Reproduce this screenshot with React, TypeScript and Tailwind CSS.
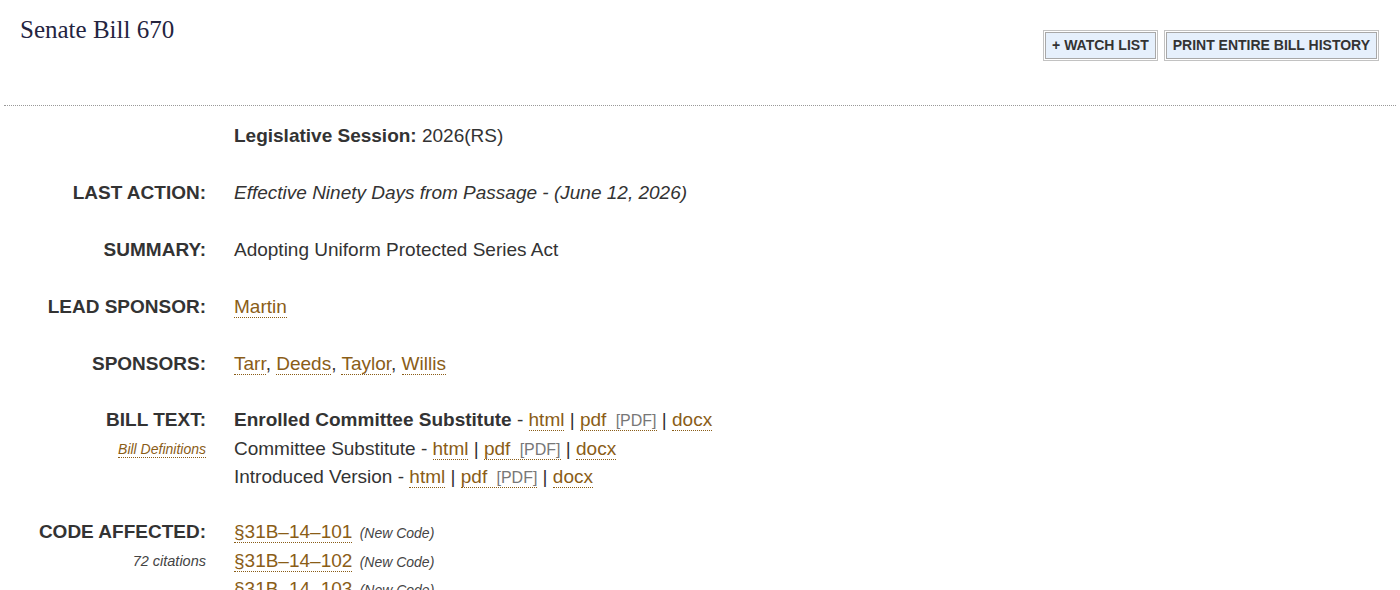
import React from 'react';

const link = 'text-[#8a5d17] border-b border-dotted border-[#8a5d17] no-underline';

function A({ children }: { children: React.ReactNode }) {
  return <a href="#" className={link}>{children}</a>;
}

function Pdf() {
  return (
    <a href="#" className={link}>
      pdf <span className="text-[#777] text-[16px] leading-none ml-1">[PDF]</span>
    </a>
  );
}

function Versions({ name, bold }: { name: string; bold?: boolean }) {
  return (
    <div className="h-[28.5px]">
      <span className={bold ? 'font-bold' : ''}>{name}</span> - <A>html</A> | <Pdf /> | <A>docx</A>
    </div>
  );
}

const codes = ['§31B–14–101', '§31B–14–102', '§31B–14–103', '§31B–14–104'];

function App() {
  return (
    <div className="min-h-screen bg-white text-[#333] px-1" style={{ fontFamily: '"Liberation Sans", Arial, sans-serif' }}>
      <div className="flex justify-between items-start border-b border-dotted border-[#999] h-[106px]">
        <h1 className="ml-4 mt-[13px] text-[25px] text-[#24243f] leading-[34px]" style={{ fontFamily: '"Liberation Serif", "Times New Roman", serif' }}>
          Senate Bill 670
        </h1>
        <div className="flex gap-[6px] mt-[30px] mr-[17px]">
          <button className="h-[31px] px-2 bg-[#e6f0fc] border border-[#c2c2c2] shadow-[inset_0_0_0_1px_#fff,inset_0_0_0_2px_#a8a8a8] text-[14px] font-bold text-[#333]">
            + WATCH LIST
          </button>
          <button className="h-[31px] px-2 bg-[#e6f0fc] border border-[#c2c2c2] shadow-[inset_0_0_0_1px_#fff,inset_0_0_0_2px_#a8a8a8] text-[14px] font-bold text-[#333]">
            PRINT ENTIRE BILL HISTORY
          </button>
        </div>
      </div>

      <div className="grid grid-cols-[202px_1fr] gap-x-7 gap-y-[28.5px] pt-[16px] text-[19px] leading-[28.5px]">
        <div />
        <div><span className="font-bold">Legislative Session:</span> 2026(RS)</div>

        <div className="text-right font-bold">LAST ACTION:</div>
        <div className="italic">Effective Ninety Days from Passage - (June 12, 2026)</div>

        <div className="text-right font-bold">SUMMARY:</div>
        <div>Adopting Uniform Protected Series Act</div>

        <div className="text-right font-bold">LEAD SPONSOR:</div>
        <div><A>Martin</A></div>

        <div className="text-right font-bold">SPONSORS:</div>
        <div><A>Tarr</A>, <A>Deeds</A>, <A>Taylor</A>, <A>Willis</A></div>

        <div className="text-right -mt-[1px]">
          <div className="font-bold h-[28.5px]">BILL TEXT:</div>
          <div className="text-[14px] italic h-[28.5px] leading-[28px]">
            <a href="#" className={link}>Bill Definitions</a>
          </div>
        </div>
        <div className="-mt-[1px]">
          <Versions name="Enrolled Committee Substitute" bold />
          <Versions name="Committee Substitute" />
          <Versions name="Introduced Version" />
        </div>

        <div className="text-right -mt-[2px]">
          <div className="font-bold h-[28.5px]">CODE AFFECTED:</div>
          <div className="text-[14.5px] italic text-[#444] h-[28.5px] leading-[28px]">72 citations</div>
        </div>
        <div className="-mt-[2px]">
          {codes.map((c) => (
            <div key={c} className="h-[28.5px]">
              <A>{c}</A> <span className="text-[14px] leading-none italic text-[#444] ml-0.5">(New Code)</span>
            </div>
          ))}
        </div>
      </div>
    </div>
  );
}

export default App;
